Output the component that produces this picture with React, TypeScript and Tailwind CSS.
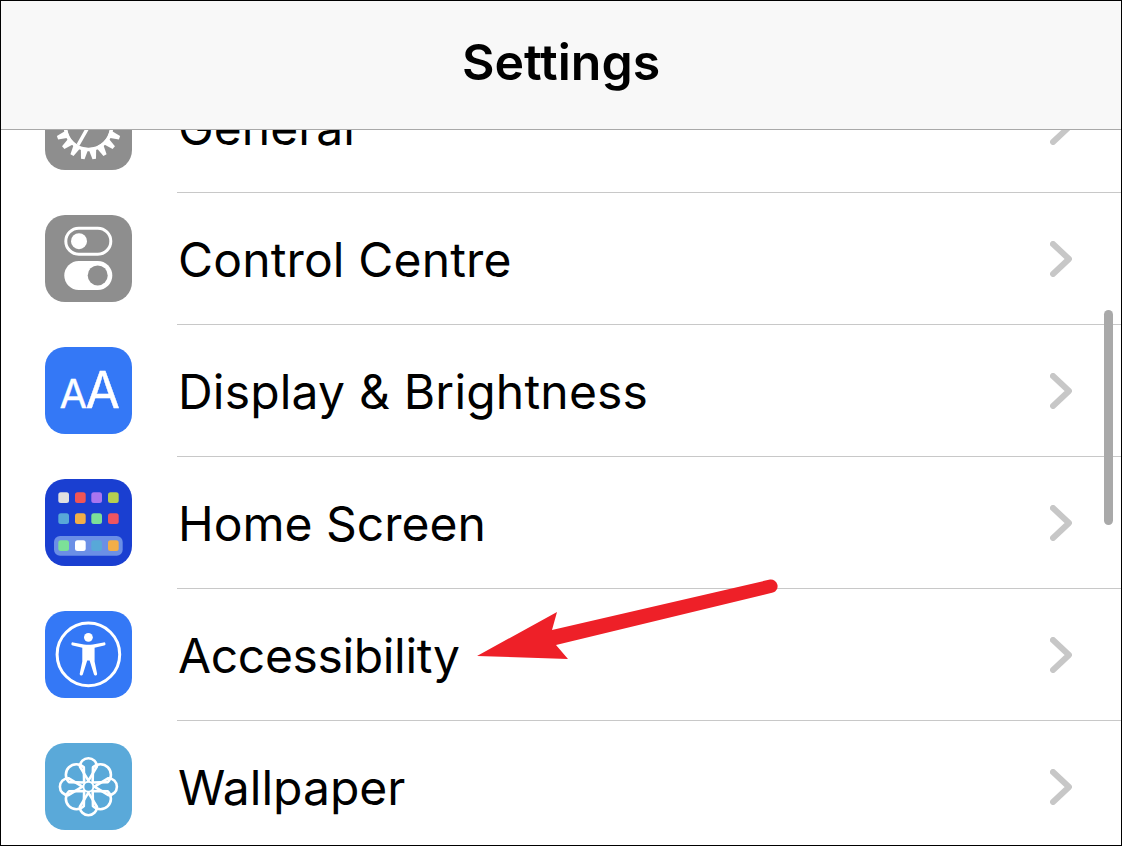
const gearTeeth = Array.from({ length: 18 }, (_, i) => (i * 360) / 18);
const petals = [0, 45, 90, 135, 180, 225, 270, 315];

function GeneralIcon() {
  return (
    <svg viewBox="0 0 87 87" className="h-full w-full">
      <rect width="87" height="87" rx="20" fill="#8e8e8e" />
      <circle cx="43.5" cy="43.5" r="23" fill="none" stroke="#fff" strokeWidth="3.5" />
      {gearTeeth.map((a) => (
        <path key={a} d="M39.5 22 41.7 10.5H45.3L47.5 22Z" fill="#fff" transform={`rotate(${a + 10} 43.5 43.5)`} />
      ))}
      <path d="M43.5 43.5 33 62" stroke="#fff" strokeWidth="3.5" fill="none" />
    </svg>
  );
}

function ControlIcon() {
  return (
    <svg viewBox="0 0 87 87" className="h-full w-full">
      <rect width="87" height="87" rx="20" fill="#8e8e8e" />
      <rect x="20.8" y="13.2" width="45" height="26" rx="13" fill="none" stroke="#fff" strokeWidth="3" />
      <circle cx="34" cy="26.2" r="8" fill="#fff" />
      <rect x="19.3" y="46" width="48" height="29" rx="14.5" fill="#fff" />
      <circle cx="52.7" cy="60.4" r="10" fill="#8e8e8e" />
    </svg>
  );
}

function DisplayIcon() {
  return (
    <svg viewBox="0 0 87 87" className="h-full w-full">
      <rect width="87" height="87" rx="20" fill="#3478f6" />
      <g fontFamily="Inter, sans-serif" fill="#fff" stroke="#fff" strokeWidth="0.4" strokeLinejoin="round">
        <text x="14.5" y="61" fontSize="40">A</text>
        <text x="40.5" y="61" fontSize="50">A</text>
      </g>
    </svg>
  );
}

const homeDots = [
  { x: 13.3, y: 13.3, c: "#e0e0e0" },
  { x: 30, y: 13.3, c: "#f05555" },
  { x: 46.3, y: 13.3, c: "#a875f0" },
  { x: 63, y: 13.3, c: "#b5cf50" },
  { x: 13.3, y: 34.3, c: "#58a8d8" },
  { x: 30, y: 34.3, c: "#f2ae48" },
  { x: 46.3, y: 34.3, c: "#7ce098" },
  { x: 63, y: 34.3, c: "#ee5560" },
  { x: 13.3, y: 61.3, c: "#7ce098" },
  { x: 30, y: 61.3, c: "#ffffff" },
  { x: 46.3, y: 61.3, c: "#58a8d8" },
  { x: 63, y: 61.3, c: "#f2ae48" },
];

function HomeIcon() {
  return (
    <svg viewBox="0 0 87 87" className="h-full w-full">
      <rect width="87" height="87" rx="20" fill="#1a3fd1" />
      <rect x="9" y="57" width="68.7" height="19.7" rx="6" fill="#6b8fe6" />
      {homeDots.map((d) => (
        <rect key={`${d.x}-${d.y}`} x={d.x} y={d.y} width="10.7" height="10.7" rx="2.5" fill={d.c} />
      ))}
    </svg>
  );
}

function AccessIcon() {
  return (
    <svg viewBox="0 0 87 87" className="h-full w-full">
      <rect width="87" height="87" rx="20" fill="#3478f6" />
      <circle cx="43.4" cy="43.4" r="31.3" fill="none" stroke="#fff" strokeWidth="3" />
      <circle cx="43.4" cy="26.3" r="4.4" fill="#fff" />
      <path
        d="M28.2 31.4 39 33.4c3 .4 5.8.4 8.8 0l10.8-2a1.6 1.6 0 0 1 .6 3.2l-9.6 2.2v13.6l2.5 12.3a1.6 1.6 0 0 1-3.1.7L44.6 49.6h-2.4l-4.4 13.8a1.6 1.6 0 0 1-3.1-.7L37.3 50.4V36.8l-9.6-2.2a1.6 1.6 0 0 1 .5-3.2Z"
        fill="#fff"
      />
    </svg>
  );
}

function WallpaperIcon() {
  return (
    <svg viewBox="0 0 87 87" className="h-full w-full">
      <rect width="87" height="87" rx="20" fill="#5aa9d9" />
      <g transform="translate(43.4 43.7)" fill="none" stroke="#fff" strokeWidth="2.6" strokeLinejoin="round">
        {petals.map((a, i) =>
          i % 2 === 0 ? (
            <path key={a} d="M0 -6 L-8.5 -20 A8.5 8.5 0 0 1 8.5 -20 Z" transform={`rotate(${a})`} />
          ) : (
            <path key={a} d="M0 -6 L-10.5 -17 A10.5 10.5 0 0 1 10.5 -17 Z" transform={`rotate(${a})`} />
          ),
        )}
      </g>
      <circle cx="43.4" cy="43.7" r="5" fill="#5aa9d9" stroke="#fff" strokeWidth="2" />
    </svg>
  );
}

function Chevron() {
  return (
    <svg viewBox="0 0 22 36" className="h-9 w-[22px]">
      <path d="M3 3 19 18 3 33" fill="none" stroke="#c7c7c7" strokeWidth="6" strokeLinecap="round" strokeLinejoin="round" />
    </svg>
  );
}

const rows = [
  { label: "General", icon: <GeneralIcon />, track: "" },
  { label: "Control Centre", icon: <ControlIcon />, track: "tracking-[0.15px]" },
  { label: "Display & Brightness", icon: <DisplayIcon />, track: "tracking-[0.2px]" },
  { label: "Home Screen", icon: <HomeIcon />, track: "" },
  { label: "Accessibility", icon: <AccessIcon />, track: "tracking-[-0.35px]" },
  { label: "Wallpaper", icon: <WallpaperIcon />, track: "" },
];

export default function App() {
  return (
    <main className="relative flex h-[846px] w-[1122px] flex-col overflow-hidden border border-black bg-white font-['Inter',sans-serif] text-black">
      {/* header */}
      <header className="flex h-[129px] shrink-0 items-center justify-center border-b border-[#a9a9a9] bg-[#f8f8f8] pb-[5px]">
        <h1 className="text-[50px] font-semibold">Settings</h1>
      </header>

      {/* list, scrolled so General sits under the header */}
      <div className="min-h-0 flex-1 overflow-hidden">
        <ul className="-mt-[69px]">
          {rows.map((row) => (
            <li key={row.label} className="flex h-[132px] items-center pl-[44px]">
              <div className="mb-[2px] h-[87px] w-[87px] shrink-0">{row.icon}</div>
              <div className="ml-[45px] flex h-full flex-1 items-center justify-between border-b border-[#c8c8c8] pr-[49px] pl-[1px]">
                <span className={`pt-[3px] text-[48px] ${row.track}`}>{row.label}</span>
                <Chevron />
              </div>
            </li>
          ))}
        </ul>
      </div>

      {/* scrollbar */}
      <div className="absolute top-[309px] right-[8px] h-[215px] w-[9px] rounded-full bg-[#a9a9a9]" />

      {/* red annotation arrow */}
      <svg viewBox="0 0 1122 846" className="pointer-events-none absolute -top-px -left-px h-[846px] w-[1122px]">
        <path
          d="M477 656 557 612 552 630 770 579.5A6.7 6.7 0 0 1 773 592.5L556 645 568 659Z"
          fill="#ee2028"
        />
      </svg>
    </main>
  );
}
